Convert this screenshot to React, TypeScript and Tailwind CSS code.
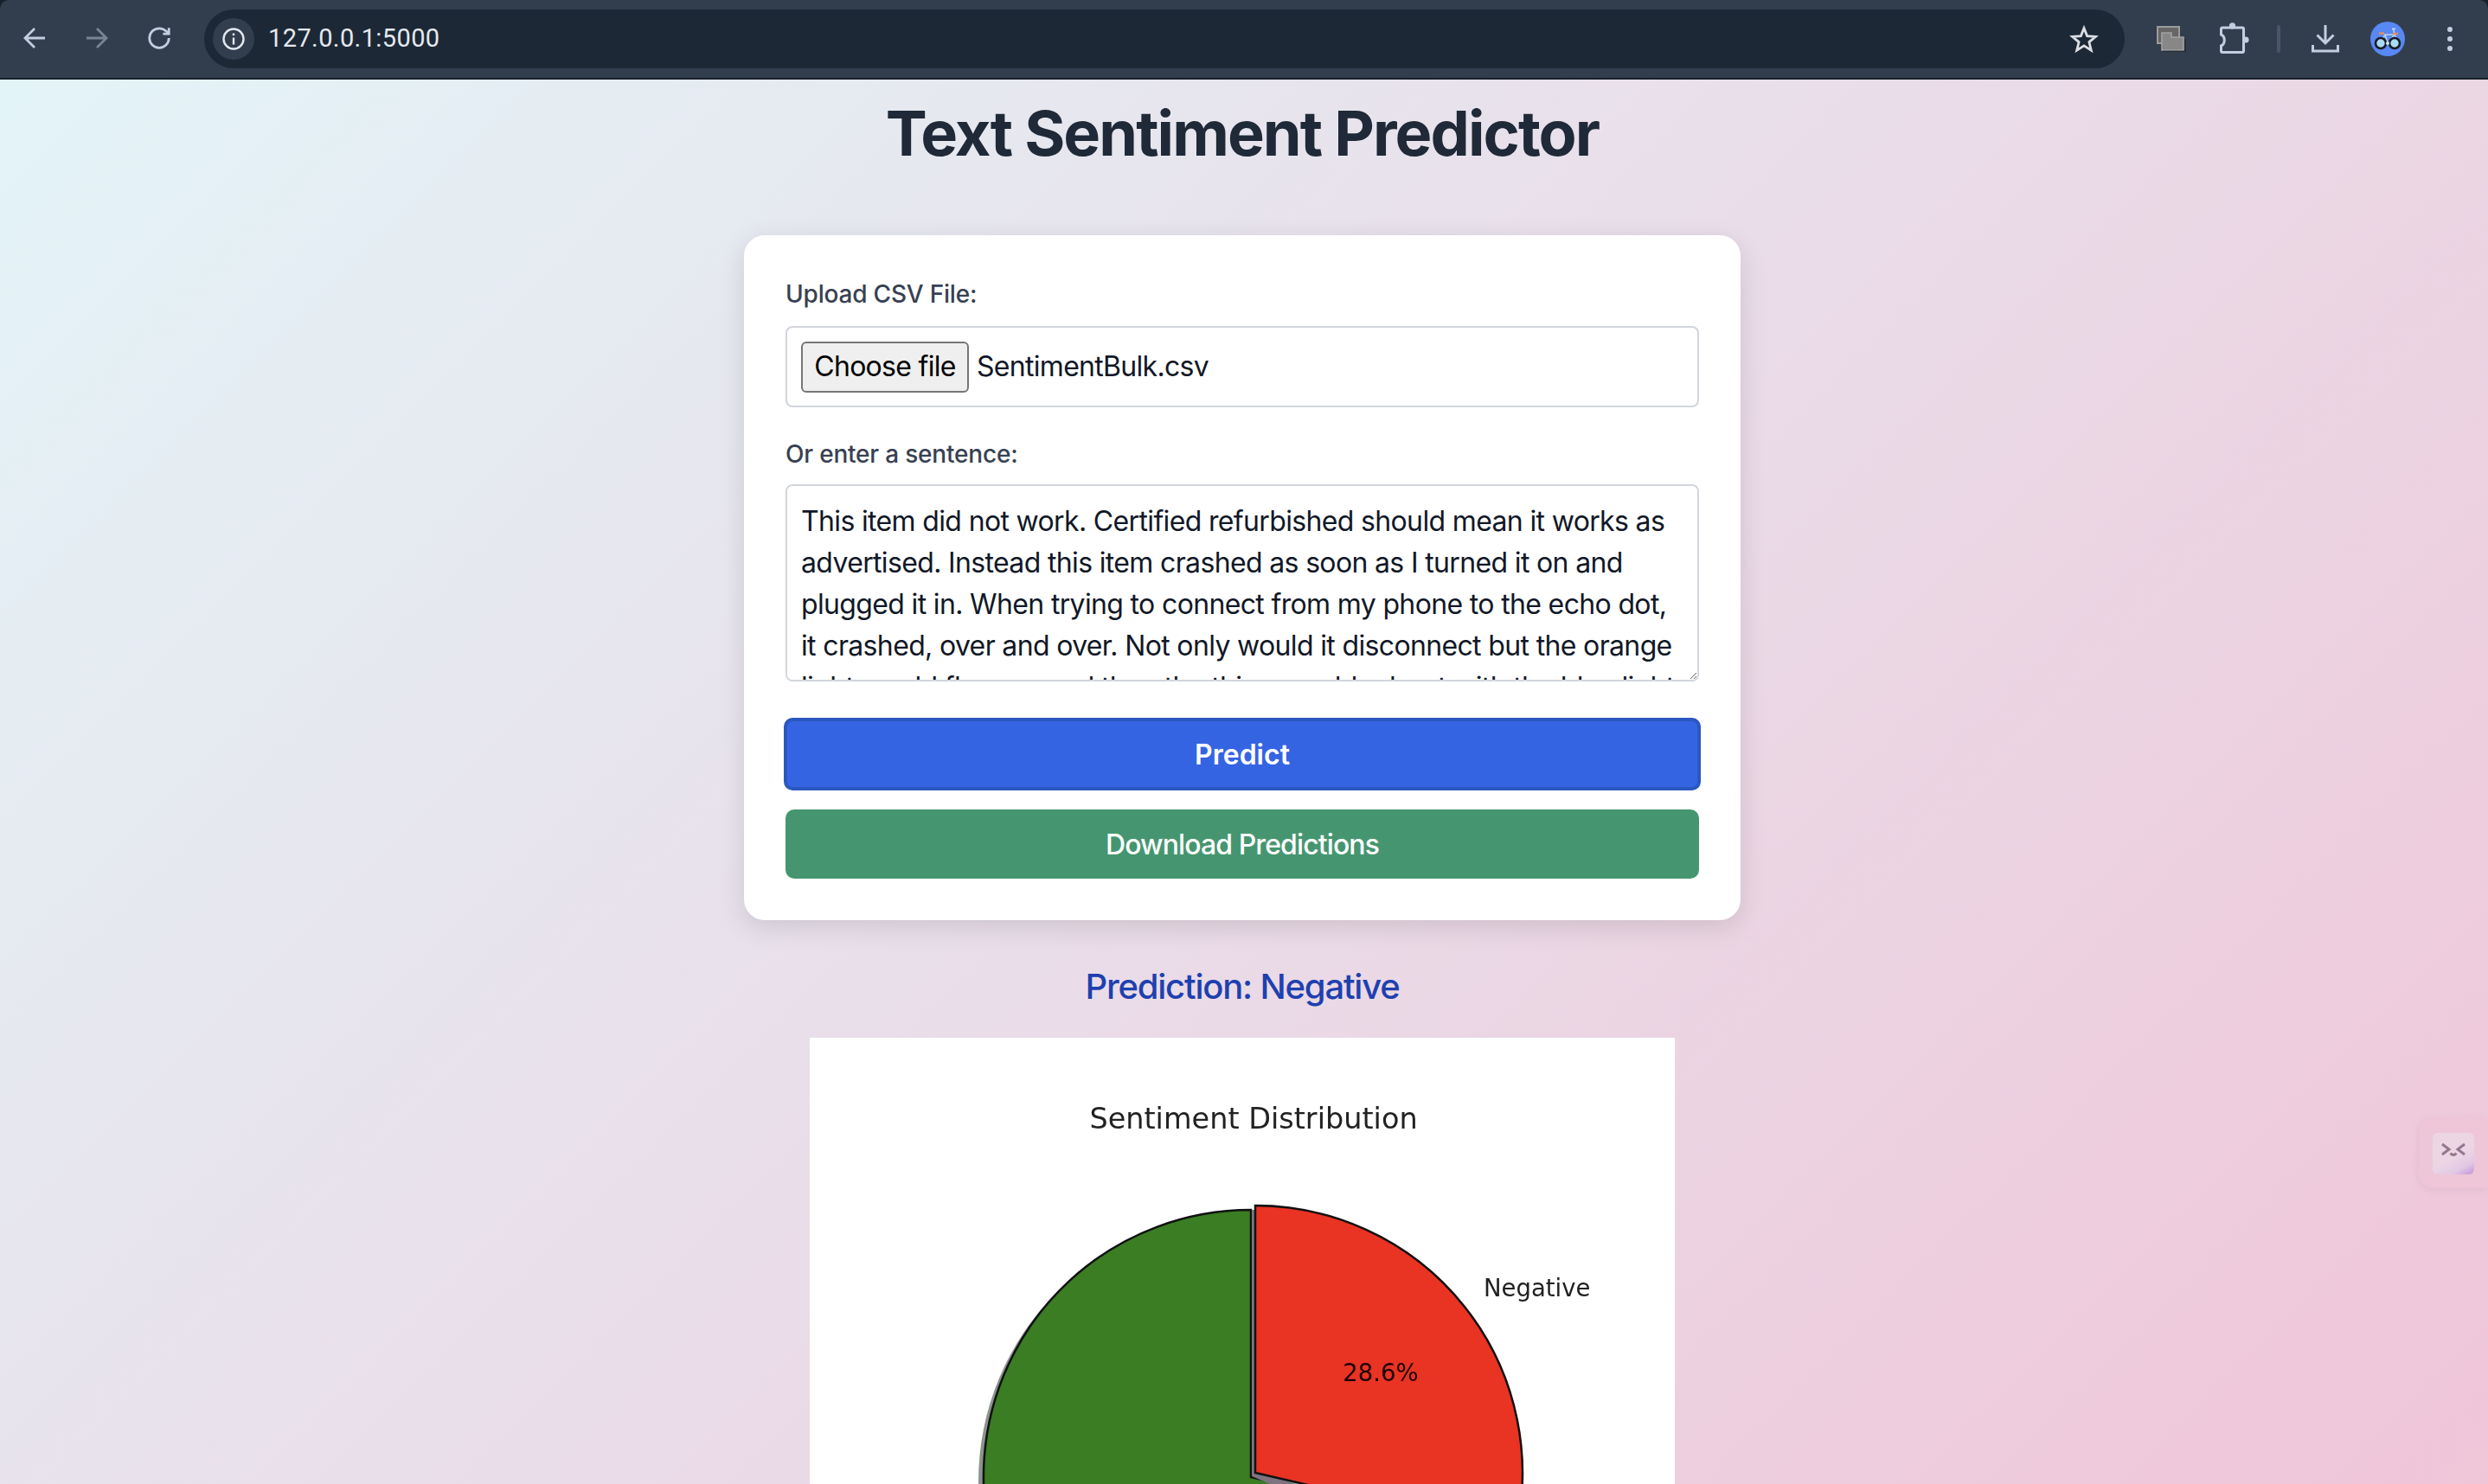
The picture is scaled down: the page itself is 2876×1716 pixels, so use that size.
import React from 'react';

const SENTENCE =
  'This item did not work. Certified refurbished should mean it works as advertised. Instead this item crashed as soon as I turned it on and plugged it in. When trying to connect from my phone to the echo dot, it crashed, over and over. Not only would it disconnect but the orange light would flare up and then the thing would reboot with the blue light on the echo dot and it kept on going like that.';

function BrowserBar() {
  return (
    <div className="h-[92px] bg-[#17202b]">
      <div className="h-[90px] rounded-t-[10px] bg-[#323e4e] flex items-center text-[#c3cfe0]">
        {/* back */}
        <svg width="28" height="28" viewBox="0 0 28 28" fill="none" stroke="currentColor" strokeWidth="2.8" className="ml-[26px] mt-[-2px]">
          <path d="M26 14H4M14 3 3 14l11 11" />
        </svg>
        {/* forward */}
        <svg width="28" height="28" viewBox="0 0 28 28" fill="none" stroke="#7a8594" strokeWidth="2.8" className="ml-[44px] mt-[-2px]">
          <path d="M2 14h22M14 3l11 11-11 11" />
        </svg>
        {/* reload */}
        <svg width="30" height="30" viewBox="0 0 24 24" fill="none" stroke="currentColor" strokeWidth="2.2" className="ml-[43px] mt-[-2px]">
          <path d="M21 12a9 9 0 1 1-9-9c2.52 0 4.93 1 6.74 2.74L21 8" />
          <path d="M21 2.5V8h-5.5" />
        </svg>

        <div className="ml-[37px] h-[68px] w-[2220px] rounded-full bg-[#1c2836] flex items-center pl-[10px] pr-[30px]">
          <div className="w-[48px] h-[48px] rounded-full bg-[#323e4e] flex items-center justify-center">
            <svg width="28" height="28" viewBox="0 0 28 28" fill="none" stroke="#e3e8ef" strokeWidth="2.4">
              <circle cx="14" cy="14" r="11.5" />
              <path d="M14 12.5v8" />
              <path d="M14 7.5v2.6" />
            </svg>
          </div>
          <span className="ml-[16px] text-[29px] tracking-[0.4px] text-[#e6e9ee] font-['Roboto',sans-serif]">127.0.0.1:5000</span>
          <svg width="34" height="34" viewBox="0 0 34 34" fill="none" stroke="#dcdfe4" strokeWidth="2.8" strokeLinejoin="miter" className="ml-auto">
            <path d="M17 4.5 20.6 13.6 30.5 14.3 22.9 20.6 25.3 30.2 17 24.9 8.7 30.2 11.1 20.6 3.5 14.3 13.4 13.6Z" />
          </svg>
        </div>

        {/* tab search thing */}
        <svg width="34" height="30" viewBox="0 0 34 30" className="ml-[37px]">
          <rect x="1" y="1" width="25" height="19" fill="#666" stroke="#9b9b9b" strokeWidth="2" />
          <path d="M6 9V28H31V13H17V8H6Z" fill="#878787" stroke="#a3a3a3" strokeWidth="1.6" />
          <path d="M7 29.5H33V15" fill="none" stroke="#262c35" strokeWidth="1.6" />
        </svg>
        {/* extensions */}
        <svg width="38" height="38" viewBox="0 0 38 38" fill="none" stroke="currentColor" strokeWidth="3" className="ml-[36px]">
          <path d="M4.5 7.5Q4.5 6 6 6H29Q30.5 6 30.5 7.5V33Q30.5 34.5 29 34.5H6Q4.5 34.5 4.5 33V27C9.5 25 9.5 16 4.5 14Z" />
          <circle cx="17.5" cy="3.8" r="3.6" fill="currentColor" stroke="none" />
          <circle cx="33" cy="20" r="3.6" fill="currentColor" stroke="none" />
        </svg>
        <div className="ml-[31px] w-[4px] h-[32px] rounded-full bg-[#4a5667]" />
        {/* downloads */}
        <svg width="32" height="32" viewBox="0 0 32 32" fill="none" stroke="currentColor" strokeWidth="3" className="ml-[36px]">
          <path d="M16 0V21M6.5 11.5 16 21l9.5-9.5" />
          <path d="M1.5 23v7h29v-7" />
        </svg>
        {/* avatar */}
        <svg width="40" height="40" viewBox="0 0 40 40" className="ml-[36px]">
          <circle cx="20" cy="20" r="20" fill="#5788f3" />
          <path d="M12 24 17 15H28L20 25ZM17 15l3 10M28 15l4 9M27 10l1 5" fill="none" stroke="#b7d4f0" strokeWidth="1.6" />
          <path d="M10 13.5h6" stroke="#f08a5d" strokeWidth="2.4" />
          <path d="M26 14h6" stroke="#f08a5d" strokeWidth="2.4" />
          <path d="M25 8.5h4" stroke="#d9e6f5" strokeWidth="1.6" />
          <circle cx="12" cy="25" r="6" fill="#a8dcf5" stroke="#1b1b22" strokeWidth="2.6" />
          <circle cx="28" cy="25" r="6" fill="#a8dcf5" stroke="#1b1b22" strokeWidth="2.6" />
          <circle cx="20" cy="25" r="2" fill="#c9e4f2" />
        </svg>
        {/* menu */}
        <div className="ml-[49px] flex flex-col gap-[5px]">
          <div className="w-[6px] h-[6px] rounded-full bg-[#c3cfe0]" />
          <div className="w-[6px] h-[6px] rounded-full bg-[#c3cfe0]" />
          <div className="w-[6px] h-[6px] rounded-full bg-[#c3cfe0]" />
        </div>
      </div>
    </div>
  );
}

function PieChart() {
  return (
    <div className="mx-auto mt-[31px] w-[1000px] h-[1000px] bg-white">
      <svg width="1000" height="1000" viewBox="0 0 1000 1000" className="blur-[0.7px]">
        <text x="513" y="105" textAnchor="middle" fontSize="33.5" fill="#222" fontFamily="'DejaVu Sans', sans-serif">
          Sentiment Distribution
        </text>
        {/* shadow */}
        <circle cx="504" cy="513" r="309" fill="#8b958b" />
        {/* green slice */}
        <path d="M510 508V199A309 309 0 1 0 811 577.5Z" fill="#3a7d22" stroke="#111" strokeWidth="2.5" />
        {/* red slice shadow showing in the gap */}
        <path d="M511 507V199H520V500L620 540L600 545Z" fill="#7d7480" />
        {/* red slice */}
        <path d="M515 503V194A309 309 0 0 1 816 572.5Z" fill="#e93323" stroke="#111" strokeWidth="2.5" />
        <text x="779" y="299" fontSize="27.5" fill="#222" fontFamily="'DejaVu Sans', sans-serif">
          Negative
        </text>
        <text x="660" y="397" textAnchor="middle" fontSize="27.5" fill="#1a0000" fontFamily="'DejaVu Sans', sans-serif">
          28.6%
        </text>
      </svg>
    </div>
  );
}

export default function App() {
  return (
    <div className="relative h-screen overflow-hidden font-['Inter',sans-serif]">
      <BrowserBar />

      <main className="h-[2500px] bg-[linear-gradient(135deg,#e3f4f8,#f2bcd2)] pt-[22px] pr-[4px]">
        <h1 className="text-center text-[72px] leading-[80px] font-bold tracking-[-1.95px] text-[#1f2937]">Text Sentiment Predictor</h1>

        <div className="mx-auto mt-[78px] w-[1152px] rounded-3xl bg-white p-[48px] shadow-[0_8px_30px_rgba(0,0,0,0.12)]">
          <label className="block text-[28px] leading-[40px] font-medium tracking-[-0.2px] text-[#374151]">Upload CSV File:</label>
          <div className="mt-[17px] h-[94px] rounded-lg border-2 border-[#d1d5db] flex items-center pl-[16px]">
            <div className="w-[194px] h-[59px] rounded-[6px] border-2 border-[#767676] bg-[#efefef] flex items-center justify-center text-[32px] tracking-[-0.7px] text-black">
              Choose file
            </div>
            <span className="ml-[9px] text-[32px] tracking-[-0.7px] text-[#111827]">SentimentBulk.csv</span>
          </div>

          <label className="block mt-[34px] text-[28px] leading-[40px] font-medium tracking-[-0.2px] text-[#374151]">Or enter a sentence:</label>
          <textarea
            readOnly
            defaultValue={SENTENCE}
            className="block mt-[15px] w-full h-[228px] rounded-lg border-2 border-[#d1d5db] px-[16px] pt-[17px] pb-[15px] text-[32px] leading-[48px] tracking-[-0.65px] text-[#111827] outline-none bg-white [scrollbar-width:none]"
          />

          <button className="block mt-[42px] mx-[-2px] w-[1060px] h-[84px] rounded-[10px] border-[4px] border-[#2a58c0] bg-[#3564e3] pt-[2px] text-[32px] font-semibold text-white">
            Predict
          </button>
          <button className="block mt-[22px] w-full h-[80px] rounded-[10px] bg-[#459670] pt-[2px] text-[32px] font-medium tracking-[-0.9px] text-white">
            Download Predictions
          </button>
        </div>

        <h2 className="mt-[49px] text-center text-[40px] leading-[56px] font-medium tracking-[-1.2px] text-[#1e40af]">Prediction: Negative</h2>

        <PieChart />
      </main>

      {/* floating widget on the right edge */}
      <div className="absolute right-0 top-[1293px] w-[80px] h-[81px] rounded-l-2xl bg-[#eec6d8] shadow-[0_2px_10px_rgba(180,120,150,0.18)] flex items-center pl-[16px]">
        <div className="w-[48px] h-[48px] rounded-md bg-[linear-gradient(150deg,#ecd6e4_55%,#e2c8e4_80%,#c193dc)] flex justify-center pt-[11px]">
          <svg width="30" height="18" viewBox="0 0 30 18" fill="none" stroke="#94788f" strokeWidth="3">
            <path d="M2 2l8 6-8 6M28 2l-8 6 8 6" />
            <path d="M11.5 12.5q3.5 4 7 0" />
          </svg>
        </div>
      </div>
    </div>
  );
}
